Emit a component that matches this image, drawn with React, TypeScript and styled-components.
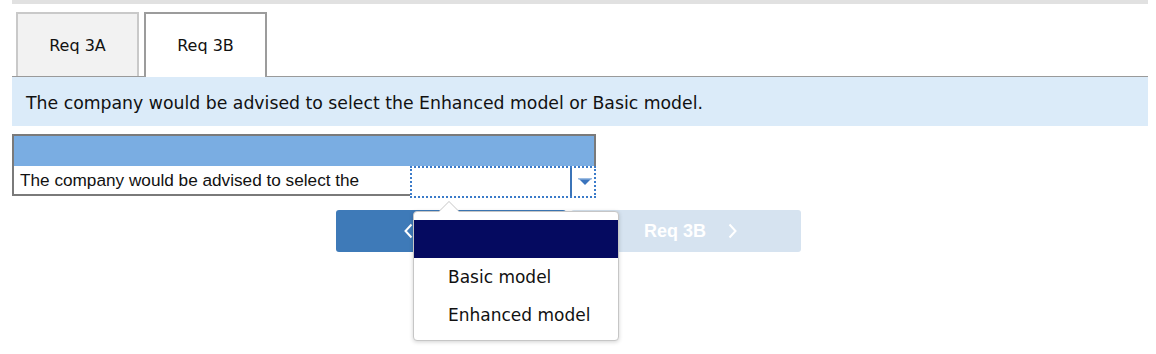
import React from 'react';
import styled, { createGlobalStyle } from 'styled-components';

const GlobalStyle = createGlobalStyle`
  html, body {
    margin: 0;
    padding: 0;
    background: #ffffff;
  }
`;

const Page = styled.div`
  width: 1136px;
  min-height: 354px;
  padding: 0 8px 0 12px;
  font-family: 'DejaVu Sans', Verdana, sans-serif;
`;

const TopRule = styled.div`
  height: 4px;
  background: #e1e1e1;
`;

const TabStrip = styled.div`
  display: flex;
  gap: 5px;
  padding: 8px 0 0 4px;
  border-bottom: 1px solid #9a9a9a;
`;

const Tab = styled.div<{ active?: boolean }>`
  width: 119px;
  height: 62px;
  display: flex;
  align-items: center;
  justify-content: center;
  font-size: 16px;
  color: #111;
  background: ${p => (p.active ? '#ffffff' : '#f2f2f2')};
  border: 2px solid ${p => (p.active ? '#9c9c9c' : '#c9c9c9')};
  border-bottom: none;
  margin-bottom: ${p => (p.active ? '-1px' : '0')};
  padding-bottom: ${p => (p.active ? '1px' : '0')};
`;

const InfoBar = styled.div`
  height: 49px;
  background: #dbebf9;
  display: flex;
  align-items: center;
  padding: 2px 0 0 14px;
  box-sizing: border-box;
  font-size: 17.3px;
  color: #111;
`;

const Table = styled.div`
  margin-top: 8px;
  width: 580px;
  border: 2px solid #7a7a7a;
  font-family: 'Liberation Sans', Arial, sans-serif;
`;

const HeaderRow = styled.div`
  height: 30px;
  background: #7aade2;
`;

const BodyRow = styled.div`
  display: flex;
  height: 28px;
`;

const LabelCell = styled.div`
  flex: 1;
  display: flex;
  align-items: center;
  padding: 1px 0 0 6px;
  font-size: 17.2px;
  color: #111;
`;

const SelectCell = styled.div`
  position: relative;
  width: 182px;
  height: 28px;
  margin: 0 -2px -2px 0;
  border: 2px dotted #3b7bc9;
  display: flex;
  justify-content: flex-end;
  background: #fff;
`;

const ArrowBox = styled.div`
  width: 24px;
  border-left: 2px solid #3b74b8;
  display: flex;
  align-items: center;
  justify-content: center;
  padding-left: 3px;
  box-sizing: border-box;
`;

const Popup = styled.div`
  position: absolute;
  left: 1px;
  top: 43px;
  width: 204px;
  padding: 8px 0 6px;
  background: #fff;
  border: 1px solid #c6c6c6;
  border-radius: 4px;
  box-shadow: 0 1px 4px rgba(0, 0, 0, 0.18);
  font-family: 'DejaVu Sans', Verdana, sans-serif;
  z-index: 2;

  &::before {
    content: '';
    position: absolute;
    left: 24px;
    top: -11px;
    border-left: 11px solid transparent;
    border-right: 11px solid transparent;
    border-bottom: 11px solid #c6c6c6;
  }

  &::after {
    content: '';
    position: absolute;
    left: 25px;
    top: -10px;
    border-left: 10px solid transparent;
    border-right: 10px solid transparent;
    border-bottom: 10px solid #fff;
  }
`;

const Option = styled.div<{ selected?: boolean }>`
  height: 38px;
  display: flex;
  align-items: center;
  padding-left: 34px;
  font-size: 17px;
  color: #111;
  background: ${p => (p.selected ? '#050a60' : 'transparent')};
`;

const NavRow = styled.div`
  display: flex;
  gap: 5px;
  margin-top: 14px;
  padding-left: 324px;
  font-family: 'Liberation Sans', Arial, sans-serif;
`;

const NavButton = styled.div<{ disabled?: boolean }>`
  width: 230px;
  height: 42px;
  box-sizing: border-box;
  padding-left: ${p => (p.disabled ? '9px' : '0')};
  border-radius: 3px;
  display: flex;
  align-items: center;
  justify-content: center;
  gap: 22px;
  color: #fff;
  font-size: 18px;
  font-weight: bold;
  background: ${p => (p.disabled ? '#d6e3f0' : '#3e7ab8')};
`;

const Chevron = ({ dir }: { dir: 'left' | 'right' }) => (
  <svg width="9" height="16" viewBox="0 0 9 16">
    <path
      d={dir === 'left' ? 'M7.5 1.5 L1.5 8 L7.5 14.5' : 'M1.5 1.5 L7.5 8 L1.5 14.5'}
      fill="none"
      stroke="#fff"
      strokeWidth="2"
    />
  </svg>
);

const DropArrow = () => (
  <svg width="14" height="8" viewBox="0 0 14 8">
    <polygon points="0,0 14,0 7,7" fill="#3b74bd" />
    <rect x="0" y="0" width="14" height="1.5" fill="#9dbde3" />
  </svg>
);

const App: React.FC = () => {
  return (
    <>
      <GlobalStyle />
      <Page>
        <TopRule />
        <TabStrip>
          <Tab>Req 3A</Tab>
          <Tab active>Req 3B</Tab>
        </TabStrip>
        <InfoBar>The company would be advised to select the Enhanced model or Basic model.</InfoBar>

        <Table>
          <HeaderRow />
          <BodyRow>
            <LabelCell>The company would be advised to select the</LabelCell>
            <SelectCell>
              <ArrowBox>
                <DropArrow />
              </ArrowBox>
              <Popup>
                <Option selected />
                <Option>Basic model</Option>
                <Option>Enhanced model</Option>
              </Popup>
            </SelectCell>
          </BodyRow>
        </Table>

        <NavRow>
          <NavButton>
            <Chevron dir="left" />
            <span>Req 3A</span>
          </NavButton>
          <NavButton disabled>
            <span>Req 3B</span>
            <Chevron dir="right" />
          </NavButton>
        </NavRow>
      </Page>
    </>
  );
};

export default App;
